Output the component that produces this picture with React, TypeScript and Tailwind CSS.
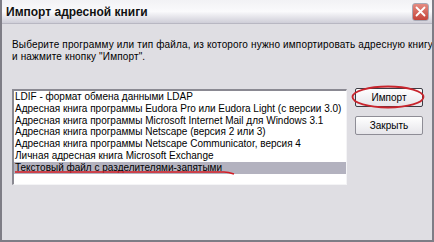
import React from "react";

const items = [
  "LDIF - формат обмена данными LDAP",
  "Адресная книга программы Eudora Pro или Eudora Light (с версии 3.0)",
  "Адресная книга программы Microsoft Internet Mail для Windows 3.1",
  "Адресная книга программы Netscape (версия 2 или 3)",
  "Адресная книга программы Netscape Communicator, версия 4",
  "Личная адресная книга Microsoft Exchange",
  "Текстовый файл с разделителями-запятыми",
];

function CloseButton() {
  return (
    <div className="w-[17px] h-[18px] rounded-[3px] bg-gradient-to-b from-[#e48a80] to-[#c4433a] border border-[#a8a8b4] flex items-center justify-center">
      <svg width="11" height="11" viewBox="0 0 11 11">
        <path d="M1.5 1.5 L9.5 9.5 M9.5 1.5 L1.5 9.5" stroke="#fff" strokeWidth="1.8" strokeLinecap="round" />
      </svg>
    </div>
  );
}

function XpButton({ label, isDefault }: { label: string; isDefault?: boolean }) {
  return (
    <div
      className={`w-[68px] h-[19px] rounded-[2px] border flex items-center justify-center bg-gradient-to-b from-[#ffffff] to-[#e6e5ea] text-[10px] text-black ${
        isDefault ? "border-[#3c3c44]" : "border-[#8e8d96]"
      }`}
    >
      {label}
    </div>
  );
}

export default function App() {
  return (
    <div className="w-[434px] h-[242px] flex flex-col bg-[#dfdee3] border-x-2 border-b-2 border-[#7e7d86] font-['Liberation_Sans',Arial,sans-serif] overflow-hidden">
      {/* title bar */}
      <div className="h-[24px] flex items-center justify-between pl-[4px] pr-[3px] bg-gradient-to-b from-[#f2f2f5] via-[#fafafc] to-[#cfced8] border-b border-[#b8b7c2]">
        <span className="text-[12px] font-bold text-[#111] pt-[1px]">Импорт адресной книги</span>
        <CloseButton />
      </div>

      {/* body */}
      <div className="flex-1 flex flex-col pl-[10px] pr-[4px] pt-[15px]">
        <p className="text-[10px] tracking-[0.15px] leading-[12px] text-black whitespace-nowrap">
          Выберите программу или тип файла, из которого нужно импортировать адресную книгу
          <br />
          и нажмите кнопку "Импорт".
        </p>

        <div className="flex gap-[8px] mt-[26px]">
          {/* list */}
          <div className="relative w-[335px] h-[96px] bg-white border-t-2 border-l-2 border-t-[#8a8992] border-l-[#8a8992] border-b border-r border-b-[#f4f4f6] border-r-[#f4f4f6]">
            {items.map((item, i) => (
              <div
                key={item}
                className={`h-[11.8px] leading-[11.8px] pl-[1px] text-[10px] text-black whitespace-nowrap ${
                  i === items.length - 1 ? "bg-[#b3b2bf]" : ""
                }`}
              >
                {item}
              </div>
            ))}
            <svg className="absolute left-0 top-[78px]" width="224" height="8" viewBox="0 0 224 8">
              <path d="M1 3 C60 3.5 150 2.5 210 3 C214 3 217 4 220 5" stroke="#d41c24" strokeWidth="1.6" fill="none" />
            </svg>
          </div>

          {/* buttons */}
          <div className="flex flex-col gap-[9px] -mt-[1px]">
            <div className="relative">
              <XpButton label="Импорт" isDefault />
              <svg className="absolute -left-[4px] -top-[3px]" width="76" height="24" viewBox="0 0 76 24">
                <ellipse cx="37" cy="12" rx="35.5" ry="10.5" stroke="#c8242c" strokeWidth="1.8" fill="none" />
              </svg>
            </div>
            <XpButton label="Закрыть" />
          </div>
        </div>
      </div>
    </div>
  );
}
